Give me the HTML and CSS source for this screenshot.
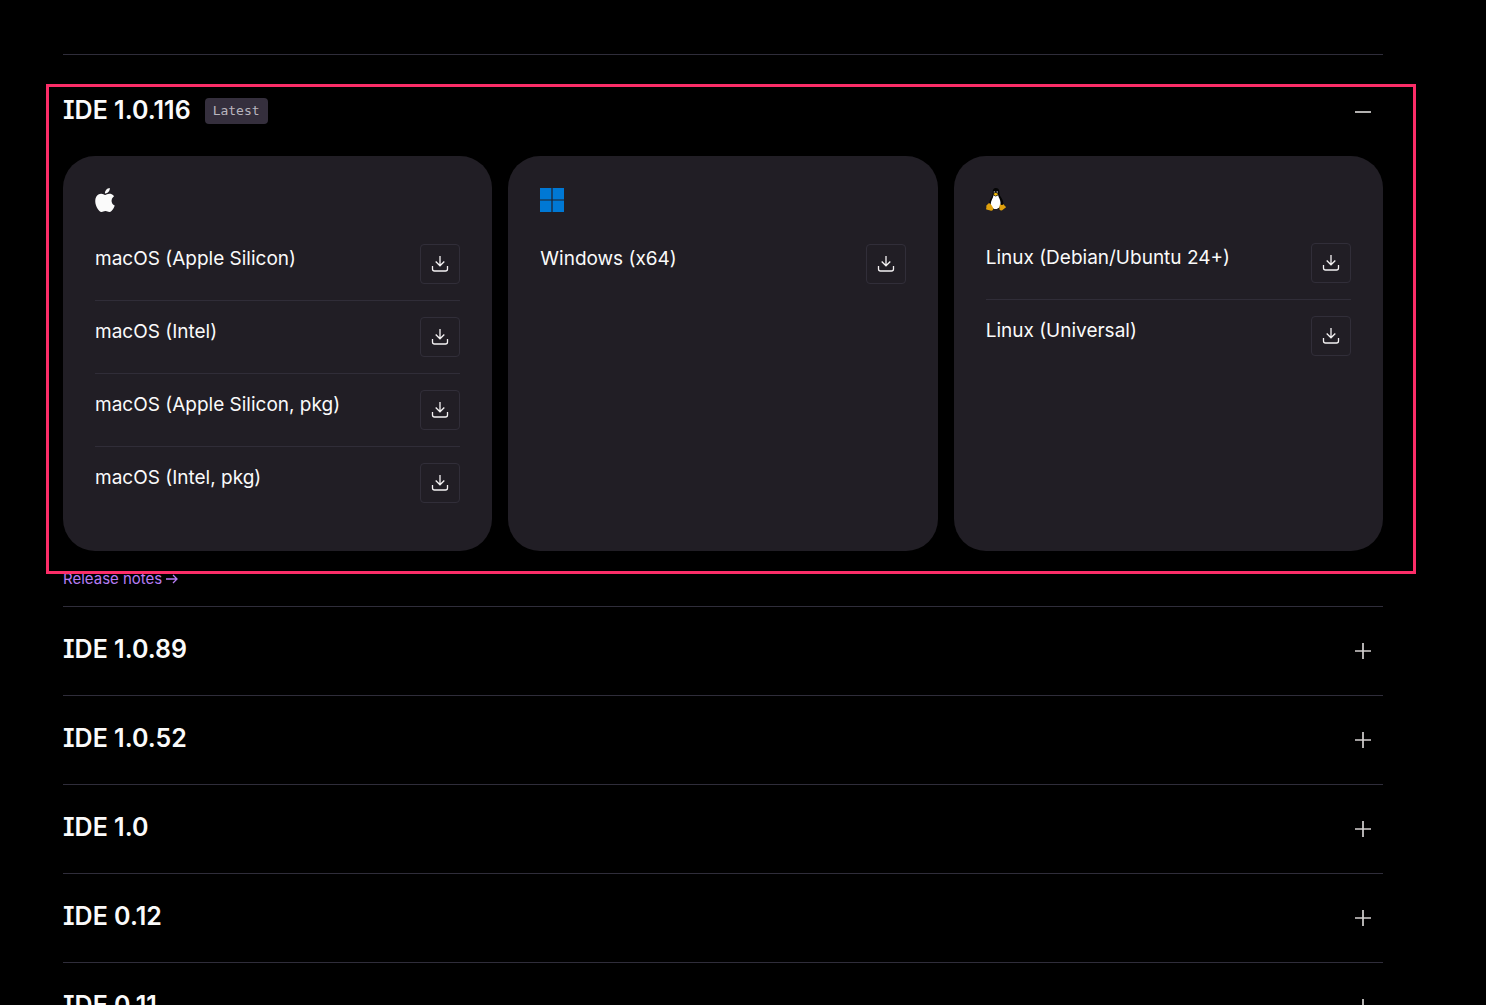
FILE: index.html
```html
<!DOCTYPE html>
<html lang="en">
<head>
<meta charset="utf-8">
<meta name="viewport" content="width=device-width, initial-scale=1">
<title>IDE downloads</title>
<link rel="stylesheet" href="styles.css">
</head>
<body>
<svg class="sprite" aria-hidden="true">
  <symbol id="download" viewBox="0 0 20 20"><path d="M10 2v9.500M5.700 7.500l4.300 4.300 4.300-4.300M2.500 12v3c0 1.300.7 2 2 2h11c1.300 0 2-.7 2-2v-3"/></symbol>
  <symbol id="plus" viewBox="0 0 24 24"><path d="M12 4v16M4 12h16"/></symbol>
  <symbol id="minus" viewBox="0 0 24 24"><path d="M4 12h16"/></symbol>
</svg>
<main class="releases">
  <section class="release release-open">
    <h2 class="heading"><button class="toggle" type="button" aria-expanded="true"><span class="title">IDE 1.0.116</span><span class="badge">Latest</span><svg class="toggle-icon"><use href="#minus"/></svg></button></h2>
    <div class="cards">
      <article class="card">
        <svg class="logo" width="20" height="24" viewBox="2 0 20 24" role="img" aria-label="Apple"><path fill="#fafafa" d="M12.152 6.896c-.948 0-2.415-1.078-3.960-1.040-2.040.027-3.910 1.183-4.961 3.014-2.117 3.675-.546 9.103 1.519 12.090 1.013 1.454 2.208 3.090 3.792 3.039 1.520-.065 2.090-.987 3.935-.987 1.831 0 2.350.987 3.960.948 1.637-.026 2.676-1.480 3.676-2.948 1.156-1.688 1.636-3.325 1.662-3.415-.039-.013-3.182-1.221-3.220-4.857-.026-3.040 2.480-4.494 2.597-4.559-1.429-2.090-3.623-2.324-4.390-2.376-2-.156-3.675 1.090-4.610 1.090zM15.530 3.830c.843-1.012 1.400-2.427 1.245-3.830-1.207.052-2.662.805-3.532 1.818-.78.896-1.454 2.338-1.273 3.714 1.338.104 2.715-.688 3.560-1.702z"/></svg>
        <ul class="builds">
          <li class="build"><span>macOS (Apple Silicon)</span><button class="download" type="button" aria-label="Download macOS (Apple Silicon)"><svg><use href="#download"/></svg></button></li>
          <li class="build"><span>macOS (Intel)</span><button class="download" type="button" aria-label="Download macOS (Intel)"><svg><use href="#download"/></svg></button></li>
          <li class="build"><span>macOS (Apple Silicon, pkg)</span><button class="download" type="button" aria-label="Download macOS (Apple Silicon, pkg)"><svg><use href="#download"/></svg></button></li>
          <li class="build"><span>macOS (Intel, pkg)</span><button class="download" type="button" aria-label="Download macOS (Intel, pkg)"><svg><use href="#download"/></svg></button></li>
        </ul>
      </article>
      <article class="card">
        <svg class="logo" width="24" height="24" viewBox="0 0 24 24" role="img" aria-label="Windows"><path fill="#0078d4" d="M0 0h11.400v11.400H0zM12.600 0H24v11.400H12.600zM0 12.600h11.400V24H0zM12.600 12.600H24V24H12.600z"/></svg>
        <ul class="builds">
          <li class="build"><span>Windows (x64)</span><button class="download" type="button" aria-label="Download Windows (x64)"><svg><use href="#download"/></svg></button></li>
        </ul>
      </article>
      <article class="card">
        <svg class="logo" width="20" height="23" viewBox="0 0 20 23" role="img" aria-label="Linux">
          <path fill="#050505" d="M9.800 0C7.500 0 6.600 1.700 6.700 4c.1 2.400.1 3.300-1.200 5.200C4 11.300 3.100 13.800 3.300 17l4 4h7l3-3.500c.5-2.500-.3-5.600-2.100-8-1.700-2.300-1.700-3-1.800-5.500C13.300 1.500 12.200 0 9.800 0z"/>
          <path fill="#fff" d="M7.500 7.300l2.200 1.200 2.500-1.300c.4 2.300 2.100 4 2.300 7.300.2 3.800-1.500 6.500-5 6.500-3.300 0-4.800-2.500-4.700-5.500.1-3 2.200-4.800 2.700-8.200z"/>
          <circle cx="8.400" cy="4.100" r=".8" fill="#bbb"/><circle cx="11.200" cy="4.100" r=".8" fill="#bbb"/>
          <circle cx="8.600" cy="4.300" r=".4"/><circle cx="11" cy="4.300" r=".4"/>
          <path fill="#f5bd0c" d="M7.300 6l2.300-1.300L12.300 6 9.700 8z"/>
          <path fill="#dfa00c" d="M3.400 15.300c1.300.2 3.800 4.100 3.800 5.500 0 1.600-1.300 2.200-2.900 1.700-1.300-.5-2.700-.6-3.800-1-.9-.4-.1-1.300-.1-2.200 0-1-.4-1.700.3-2.100 1-.3 1.200-2.100 2.700-1.900zM14.100 16c.7 1.200 2.400 1.400 3.400.2.700.2.500 1.300 2 2.300.9.700.3 1.100-.8 1.800-1.200.7-2 2.100-3.400 2.300-1.400.1-2.100-.9-1.900-2.500.1-1.500.1-3 .7-4.100z"/>
        </svg>
        <ul class="builds">
          <li class="build"><span>Linux (Debian/Ubuntu 24+)</span><button class="download" type="button" aria-label="Download Linux (Debian/Ubuntu 24+)"><svg><use href="#download"/></svg></button></li>
          <li class="build"><span>Linux (Universal)</span><button class="download" type="button" aria-label="Download Linux (Universal)"><svg><use href="#download"/></svg></button></li>
        </ul>
      </article>
    </div>
    <a class="notes" href="#notes">Release notes<svg width="12" height="12" viewBox="0 0 12 12" aria-hidden="true"><path d="M0 6h11M7 2l4 4-4 4"/></svg></a>
    <div class="highlight"></div>
  </section>
  <section class="release"><h2 class="heading"><button class="toggle" type="button" aria-expanded="false"><span class="title">IDE 1.0.89</span><svg class="toggle-icon"><use href="#plus"/></svg></button></h2></section>
  <section class="release"><h2 class="heading"><button class="toggle" type="button" aria-expanded="false"><span class="title">IDE 1.0.52</span><svg class="toggle-icon"><use href="#plus"/></svg></button></h2></section>
  <section class="release"><h2 class="heading"><button class="toggle" type="button" aria-expanded="false"><span class="title">IDE 1.0</span><svg class="toggle-icon"><use href="#plus"/></svg></button></h2></section>
  <section class="release"><h2 class="heading"><button class="toggle" type="button" aria-expanded="false"><span class="title">IDE 0.12</span><svg class="toggle-icon"><use href="#plus"/></svg></button></h2></section>
  <section class="release"><h2 class="heading"><button class="toggle" type="button" aria-expanded="false"><span class="title">IDE 0.11</span><svg class="toggle-icon"><use href="#plus"/></svg></button></h2></section>
</main>
</body>
</html>
```
FILE: styles.css
```css
* { box-sizing: border-box; }

html { background: #000; scrollbar-width: none; }

body {
  margin: 0;
  color: #fafafa;
  font-family: Inter, "Liberation Sans", sans-serif;
}

button { font: inherit; color: inherit; cursor: pointer; }

.sprite { display: none; }

.releases { padding: 54px 103px 0 63px; }

.release { border-top: 1px solid #2f2d3a; }

.release-open {
  position: relative;
  padding: 13px 0 15px;
}

.heading { margin: 0; font-size: 25px; font-weight: 600; }

.toggle {
  display: flex;
  align-items: center;
  gap: 14px;
  width: 100%;
  height: 88px;
  padding: 0 8px 0 0;
  border: 0;
  background: none;
  text-align: left;
}

.title {
  padding-bottom: 4px;
  line-height: 32px;
  font-feature-settings: "cv08" 1;
}

.badge {
  margin-bottom: 2px;
  padding: 0 8px;
  border-radius: 4px;
  background: #352f3d;
  color: #b9b5be;
  font: 400 13px/26px "DejaVu Sans Mono", monospace;
}

.toggle-icon {
  width: 24px;
  height: 24px;
  margin-left: auto;
  fill: none;
  stroke: #d3d0cf;
  stroke-width: 1.7;
}

.cards {
  display: grid;
  grid-template-columns: repeat(3, 1fr);
  gap: 16px;
}

.card {
  padding: 32px;
  border-radius: 32px;
  background: #211e25;
}

.logo { display: block; }

.builds { margin: 32px 0 0; padding: 0; list-style: none; }

.build {
  display: flex;
  justify-content: space-between;
  padding-bottom: 16px;
  font-size: 19px;
  line-height: 30px;
}

.build + .build { padding-top: 16px; border-top: 1px solid #302d38; }

.download {
  display: grid;
  place-items: center;
  width: 40px;
  height: 40px;
  padding: 0;
  border: 1px solid #312e39;
  border-radius: 4px;
  background: none;
}

.download svg {
  width: 20px;
  height: 20px;
  fill: none;
  stroke: #f4f2f3;
  stroke-width: 1.3;
}

.notes {
  display: flex;
  align-items: center;
  gap: 4px;
  width: fit-content;
  margin-top: 16px;
  color: #b77df5;
  font-size: 15px;
  line-height: 24px;
  text-decoration: none;
}

.notes svg { fill: none; stroke: currentColor; stroke-width: 1.3; }

.highlight {
  position: absolute;
  inset: 29px -33px 32px -17px;
  border: 3px solid #fc2d68;
  pointer-events: none;
}
```
